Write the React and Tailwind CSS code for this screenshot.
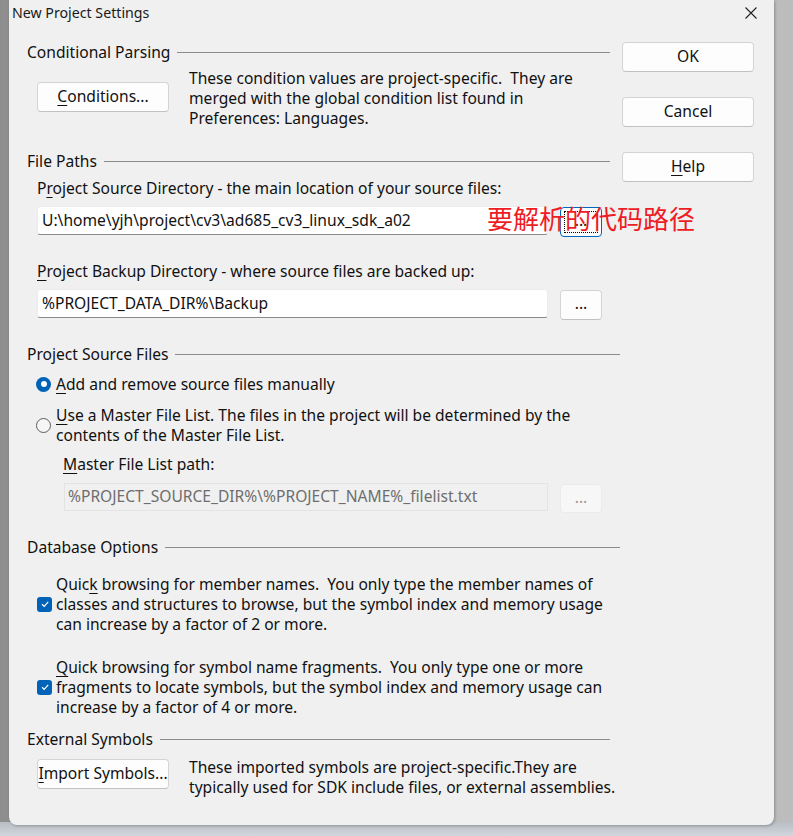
import React from "react";

const FONT = { fontFamily: '"Noto Sans", "Noto Sans CJK SC", sans-serif' };

function U({ children }) {
  return <span className="underline underline-offset-[3px] decoration-1">{children}</span>;
}

function Heading({ children, mr = "mr-0" }) {
  return (
    <div className={`flex items-center h-[20px] leading-[20px] ${mr}`}>
      <span className="whitespace-nowrap">{children}</span>
      <div className="flex-1 ml-[7px] h-px bg-[#8c8c8c]" />
    </div>
  );
}

function Btn({ children, className = "" }) {
  return (
    <div
      className={`flex items-center justify-center bg-[#fdfdfd] border border-[#d4d4d4] border-b-[#c2c2c2] rounded-[4px] text-[#111] whitespace-nowrap ${className}`}
    >
      {children}
    </div>
  );
}

function Input({ value, className = "" }) {
  return (
    <div
      className={`flex items-center pl-[4px] bg-white border border-[#ececec] border-b-[#8a8a8a] rounded-[3px] whitespace-nowrap overflow-hidden ${className}`}
    >
      {value}
    </div>
  );
}

function Checkbox() {
  return (
    <div className="w-[15px] h-[15px] rounded-[3px] bg-[#0063b8] flex items-center justify-center shrink-0">
      <svg width="10" height="10" viewBox="0 0 10 10">
        <path d="M2 5.2 L4.2 7.3 L8.2 2.8" fill="none" stroke="white" strokeWidth="1.2" />
      </svg>
    </div>
  );
}

export default function App() {
  return (
    <div
      className="relative w-[793px] h-[836px] overflow-hidden bg-gradient-to-r from-[#8e8e8e] via-[#a9a9a9] to-[#bdbdbd] text-[15.6px] text-[#111]"
      style={FONT}
    >
      <div className="absolute left-0 right-0 bottom-0 h-[14px] bg-gradient-to-b from-[#b9bdc4] to-[#d2d6dc]" />
      <div className="relative ml-[9px] w-[765px] h-[825px] bg-[#f0f0f0] rounded-b-[8px] shadow-[1px_1px_3px_rgba(0,0,0,0.25)] flex flex-col">
        {/* title bar */}
        <div className="h-[26px] flex items-center justify-between pl-[3px] pr-[17px]">
          <span className="leading-[20px] text-[14.2px] text-[#1a1a1a] -mt-[1px]">New Project Settings</span>
          <svg width="12" height="12" viewBox="0 0 12 12">
            <path d="M0.5 0.5 L11.5 11.5 M11.5 0.5 L0.5 11.5" stroke="#222" strokeWidth="1.1" />
          </svg>
        </div>

        {/* body */}
        <div className="flex pl-[18px] pr-[20px]">
          {/* left column */}
          <div className="w-[593px] flex flex-col">
            <div className="mt-[16px]">
              <Heading mr="mr-[10px]">Conditional Parsing</Heading>
            </div>
            <div className="mt-[6px] flex items-start pl-[10px]">
              <Btn className="w-[132px] h-[30px] mt-[14px] shrink-0">
                <span><U>C</U>onditions...</span>
              </Btn>
              <div className="ml-[20px] leading-[20px]">
                These condition values are project-specific.&nbsp; They are
                <br />
                merged with the global condition list found in
                <br />
                Preferences: Languages.
              </div>
            </div>

            <div className="mt-[23px]">
              <Heading mr="mr-[10px]">File Paths</Heading>
            </div>
            <div className="mt-[7px] pl-[10px] leading-[20px]">
              P<U>r</U>oject Source Directory - the main location of your source files:
            </div>
            <div className="mt-[8px] pl-[10px] flex items-start h-[31px]">
              <Input value="U:\home\yjh\project\cv3\ad685_cv3_linux_sdk_a02" className="w-[511px] h-[29px]" />
              <div className="ml-[12px] mt-[1px] w-[42px] h-[30px] rounded-[4px] border border-[#0067c0] bg-[#fdfdfd] p-[3px]">
                <div className="w-full h-full border border-dotted border-black flex items-center justify-center leading-none pb-[2px]">
                  ...
                </div>
              </div>
            </div>
            <div className="mt-[24px] pl-[10px] leading-[20px]">
              <U>P</U>roject Backup Directory - where source files are backed up:
            </div>
            <div className="mt-[8px] pl-[10px] flex items-start h-[31px]">
              <Input value="%PROJECT_DATA_DIR%\Backup" className="w-[511px] h-[29px]" />
              <Btn className="ml-[12px] mt-[1px] w-[42px] h-[30px] pb-[2px]">...</Btn>
            </div>

            <div className="mt-[24px]">
              <Heading>Project Source Files</Heading>
            </div>
            <div className="mt-[10px] pl-[9px] flex items-center leading-[20px]">
              <div className="w-[15px] h-[15px] rounded-full bg-[#0063b8] flex items-center justify-center shrink-0">
                <div className="w-[6px] h-[6px] rounded-full bg-white" />
              </div>
              <span className="ml-[5px]">
                <U>A</U>dd and remove source files manually
              </span>
            </div>
            <div className="mt-[11px] pl-[9px] flex items-center leading-[20px]">
              <div className="w-[15px] h-[15px] rounded-full border border-[#5c5c5c] bg-[#f6f6f6] shrink-0" />
              <span className="ml-[5px] whitespace-nowrap">
                <U>U</U>se a Master File List. The files in the project will be determined by the
                <br />
                contents of the Master File List.
              </span>
            </div>
            <div className="mt-[9px] pl-[36px] leading-[20px]">
              <U>M</U>aster File List path:
            </div>
            <div className="mt-[9px] pl-[37px] flex items-start h-[30px]">
              <div className="w-[484px] h-[28px] flex items-center pl-[3px] border border-[#e4e4e4] bg-[#f0f0f0] text-[#6e6e6e] whitespace-nowrap overflow-hidden">
                %PROJECT_SOURCE_DIR%\%PROJECT_NAME%_filelist.txt
              </div>
              <div className="ml-[12px] mt-[1px] w-[42px] h-[29px] rounded-[4px] bg-[#f7f7f7] border border-[#ebebeb] text-[#9a9a9a] flex items-center justify-center pb-[2px]">
                ...
              </div>
            </div>

            <div className="mt-[24px]">
              <Heading>Database Options</Heading>
            </div>
            <div className="mt-[17px] pl-[10px] flex items-center leading-[20px]">
              <Checkbox />
              <span className="ml-[4px] whitespace-nowrap">
                Quic<U>k</U> browsing for member names.&nbsp; You only type the member names of
                <br />
                classes and structures to browse, but the symbol index and memory usage
                <br />
                can increase by a factor of 2 or more.
              </span>
            </div>
            <div className="mt-[23px] pl-[10px] flex items-center leading-[20px]">
              <Checkbox />
              <span className="ml-[4px] whitespace-nowrap">
                <U>Q</U>uick browsing for symbol name fragments.&nbsp; You only type one or more
                <br />
                fragments to locate symbols, but the symbol index and memory usage can
                <br />
                increase by a factor of 4 or more.
              </span>
            </div>

            <div className="mt-[12px]">
              <Heading mr="mr-[10px]">External Symbols</Heading>
            </div>
            <div className="mt-[8px] flex items-start pl-[10px]">
              <Btn className="w-[132px] h-[30px] mt-[2px] shrink-0">
                <span><U>I</U>mport Symbols...</span>
              </Btn>
              <div className="ml-[20px] leading-[20px] whitespace-nowrap">
                These imported symbols are project-specific.They are
                <br />
                typically used for SDK include files, or external assemblies.
              </div>
            </div>
          </div>

          {/* right column */}
          <div className="ml-[2px] flex flex-col">
            <Btn className="mt-[16px] w-[132px] h-[30px]">OK</Btn>
            <Btn className="mt-[25px] w-[132px] h-[30px]">Cancel</Btn>
            <Btn className="mt-[25px] w-[132px] h-[30px]">
              <span><U>H</U>elp</span>
            </Btn>
          </div>
        </div>
      </div>

      {/* red annotation */}
      <div
        className="absolute left-[487px] top-[201px] text-[26px] leading-[34px] text-[#ee1c25] whitespace-nowrap"
        style={{ fontFamily: '"Noto Sans CJK SC", sans-serif' }}
      >
        要解析的代码路径
      </div>
    </div>
  );
}
